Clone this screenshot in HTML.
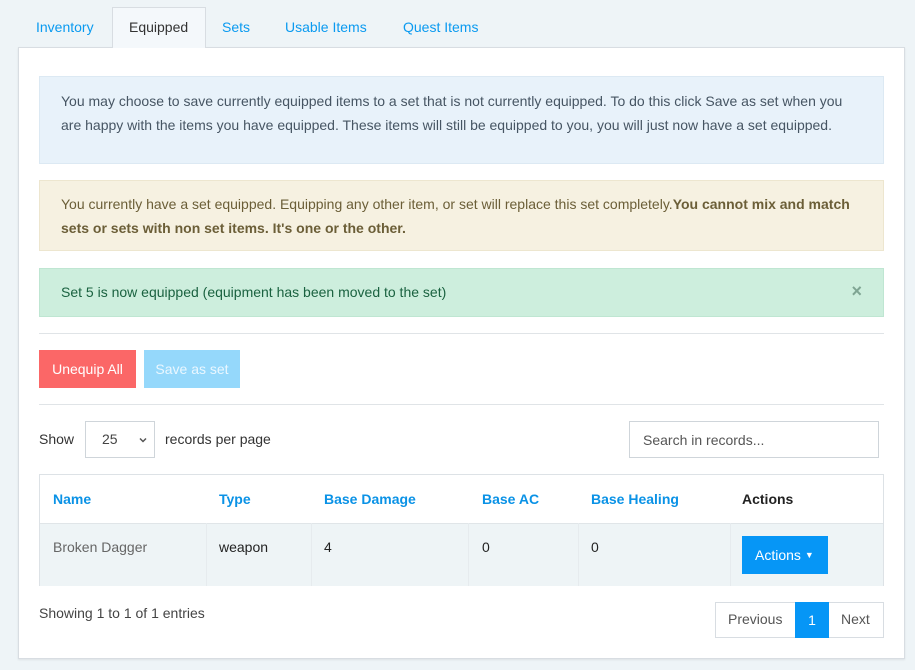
<!DOCTYPE html>
<html><head><style>
*{box-sizing:border-box;margin:0;padding:0}
body{width:915px;height:670px;background:#eef4f7;font-family:"Liberation Sans",sans-serif;font-size:14px;color:#4a5560;position:relative;overflow:hidden}
.a{position:absolute}
.tab{position:absolute;top:19px;color:#0a9af0;font-size:14px}
.card{left:18px;top:47px;width:887px;height:612px;background:#fff;border:1px solid #d8dde2;box-shadow:0 1px 2px rgba(0,0,0,.08)}
.al{left:39px;width:845px;padding:0 21px}
.th{position:absolute;top:16px;font-weight:bold;color:#0a92e6}
.td{position:absolute;top:16px;color:#222}
.vl{position:absolute;top:48px;width:1px;height:63px;background:#e6ebee}
</style></head><body>
<div class="a card"></div>
<div class="a" style="left:112px;top:7px;width:94px;height:41px;background:#f4f8fb;border:1px solid #d8dde2;border-bottom:none"></div>
<div class="tab" style="left:36px">Inventory</div>
<div class="tab" style="left:129px;color:#333">Equipped</div>
<div class="tab" style="left:222px">Sets</div>
<div class="tab" style="left:285px">Usable Items</div>
<div class="tab" style="left:403px">Quest Items</div>

<div class="a al" style="top:76px;height:88px;background:#e8f2fa;border:1px solid #dce9f3;padding-top:12px;line-height:24px;color:#465563">You may choose to save currently equipped items to a set that is not currently equipped. To do this click Save as set when you are happy with the items you have equipped. These items will still be equipped to you, you will just now have a set equipped.</div>
<div class="a al" style="top:180px;height:71px;background:#f6f1e1;border:1px solid #ede6cf;padding-top:11px;line-height:24px;color:#6b5e37;padding-right:18px">You currently have a set equipped. Equipping any other item, or set will replace this set completely.<b>You cannot mix and match sets or sets with non set items. It's one or the other.</b></div>
<div class="a al" style="top:268px;height:49px;background:#cdeedd;border:1px solid #bfe6d2;padding-top:15px;color:#1a6240">Set 5 is now equipped (equipment has been moved to the set)<span style="position:absolute;right:21px;top:12px;font-size:18px;font-weight:bold;color:#7fa593">×</span></div>
<div class="a" style="left:39px;top:333px;width:845px;height:1px;background:#e0e4e7"></div>
<div class="a" style="left:39px;top:350px;width:97px;height:38px;background:#fb6767;color:#fff;text-align:center;line-height:38px">Unequip All</div>
<div class="a" style="left:144px;top:350px;width:96px;height:38px;background:#95d8fb;color:#eaf7ff;text-align:center;line-height:38px">Save as set</div>
<div class="a" style="left:39px;top:404px;width:845px;height:1px;background:#e0e4e7"></div>
<div class="a" style="left:39px;top:431px;color:#333">Show</div>
<div class="a" style="left:85px;top:421px;width:70px;height:37px;border:1px solid #cfd5da;padding:9px 16px;color:#444">25<svg style="position:absolute;right:7px;top:15px" width="8" height="6" viewBox="0 0 8 6"><path d="M1 1.5L4 4.5L7 1.5" fill="none" stroke="#555" stroke-width="1.5"/></svg></div>
<div class="a" style="left:165px;top:431px;color:#333">records per page</div>
<div class="a" style="left:629px;top:421px;width:250px;height:37px;border:1px solid #cfd5da;padding:10px 13px;color:#555">Search in records...</div>

<div class="a" style="left:39px;top:474px;width:845px;height:112px;border:1px solid #dde2e6">
<div class="a" style="left:0;top:48px;width:843px;height:63px;background:#eef4f6;border-top:1px solid #e0e5e8"></div>
<div class="vl" style="left:166px"></div><div class="vl" style="left:271px"></div><div class="vl" style="left:428px"></div><div class="vl" style="left:538px"></div><div class="vl" style="left:690px"></div>
<div class="th" style="left:13px">Name</div><div class="th" style="left:179px">Type</div><div class="th" style="left:284px">Base Damage</div><div class="th" style="left:442px">Base AC</div><div class="th" style="left:551px">Base Healing</div><div class="th" style="left:702px;color:#222">Actions</div>
<div class="td" style="left:13px;top:64px;color:#666">Broken Dagger</div><div class="td" style="left:179px;top:64px">weapon</div><div class="td" style="left:284px;top:64px">4</div><div class="td" style="left:442px;top:64px">0</div><div class="td" style="left:551px;top:64px">0</div>
<div class="a" style="left:702px;top:61px;width:86px;height:38px;background:#0696f6;color:#fff;line-height:38px;padding-left:13px">Actions <span style="font-size:9px;vertical-align:2px">▼</span></div>
</div>
<div class="a" style="left:39px;top:605px;color:#444">Showing 1 to 1 of 1 entries</div>
<div class="a" style="left:715px;top:602px;width:169px;height:36px;border:1px solid #d8dde2"></div>
<div class="a" style="left:728px;top:611px;color:#555">Previous</div>
<div class="a" style="left:795px;top:602px;width:34px;height:36px;background:#0696f6;color:#fff;text-align:center;line-height:36px">1</div>
<div class="a" style="left:841px;top:611px;color:#555">Next</div>
</body></html>
